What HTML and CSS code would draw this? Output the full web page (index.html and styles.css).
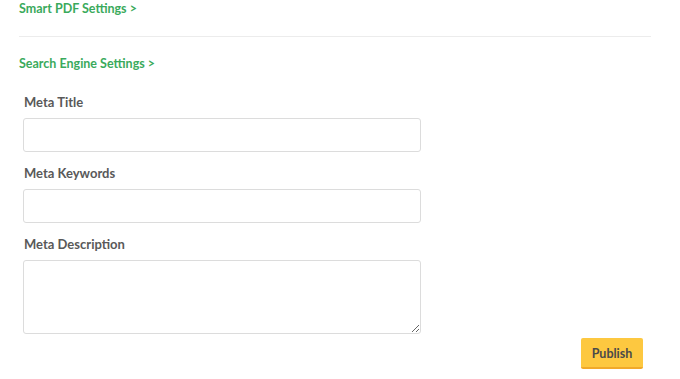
FILE: index.html
```html
<!DOCTYPE html>
<html>
<head>
<meta charset="utf-8">
<link rel="stylesheet" href="styles.css">
</head>
<body>
<div class="page">
  <a class="section-link first" href="#">Smart PDF Settings &gt;</a>
  <div class="divider"></div>
  <a class="section-link" href="#">Search Engine Settings &gt;</a>
  <form class="seo-form">
    <div class="field">
      <label class="field-label">Meta Title</label>
      <input class="field-input" type="text">
    </div>
    <div class="field">
      <label class="field-label">Meta Keywords</label>
      <input class="field-input" type="text">
    </div>
    <div class="field">
      <label class="field-label">Meta Description</label>
      <textarea class="field-input field-textarea"></textarea>
    </div>
  </form>
  <div class="actions">
    <button class="publish" type="button">Publish</button>
  </div>
</div>
</body>
</html>
```
FILE: styles.css
```css
html, body {
  margin: 0;
  padding: 0;
  background: #ffffff;
}
body {
  font-family: Lato, "Noto Sans", sans-serif;
}
.page {
  width: 632px;
  padding-left: 19px;
  display: flex;
  flex-direction: column;
}
.section-link {
  display: block;
  color: #3aaa5c;
  font-size: 12.5px;
  font-weight: bold;
  line-height: 16px;
  text-decoration: none;
  margin-top: 1px;
}
.section-link.first {
  margin-top: 1px;
}
.divider {
  height: 1px;
  background: #ececec;
  margin-top: 19px;
  margin-bottom: 18px;
}
.seo-form {
  display: flex;
  flex-direction: column;
  gap: 13px;
  margin-top: 22px;
  padding-left: 4px;
}
.field {
  display: flex;
  flex-direction: column;
}
.field-label {
  color: #595959;
  font-size: 13px;
  font-weight: bold;
  line-height: 16px;
  margin-bottom: 8px;
  padding-left: 1px;
}
.field-input {
  box-sizing: border-box;
  width: 398px;
  height: 34px;
  border: 1px solid #dcdcdc;
  border-radius: 3px;
  background: #fff;
  margin: 0;
  font-family: inherit;
}
.field-textarea {
  height: 74px;
  resize: vertical;
}
.actions {
  display: flex;
  justify-content: flex-end;
  padding-right: 8px;
  margin-top: 4px;
}
.publish {
  box-sizing: border-box;
  width: 62px;
  height: 31px;
  background: #fdc840;
  border: none;
  border-bottom: 2px solid #f1a92a;
  border-radius: 2px;
  color: #4a4a4a;
  font-family: inherit;
  font-size: 12.5px;
  font-weight: bold;
  padding: 0;
  padding-top: 1px;
}
```
